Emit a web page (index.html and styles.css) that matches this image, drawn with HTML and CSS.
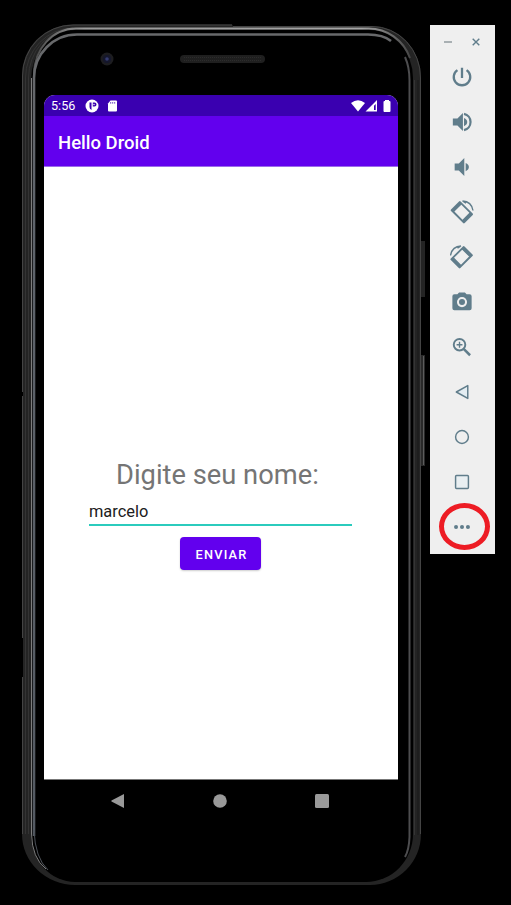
FILE: index.html
```html
<!DOCTYPE html>
<html lang="pt">
<head>
<meta charset="utf-8">
<title>Hello Droid</title>
<link rel="stylesheet" href="styles.css">
</head>
<body>
<main class="desktop">
  <section class="phone">
    <svg class="frame" viewBox="0 0 430 905" fill="none" aria-hidden="true">
      <defs>
        <linearGradient id="topEdge" gradientUnits="userSpaceOnUse" x1="30" y1="0" x2="420" y2="0">
          <stop offset="0" stop-color="#444"/><stop offset=".14" stop-color="#999"/><stop offset=".85" stop-color="#a5a5a5"/><stop offset="1" stop-color="#333"/>
        </linearGradient>
        <linearGradient id="slate" gradientUnits="userSpaceOnUse" x1="0" y1="34" x2="0" y2="870">
          <stop offset="0" stop-color="#68696b"/><stop offset=".2" stop-color="#60656c"/><stop offset=".96" stop-color="#555b63"/><stop offset="1" stop-color="#17191b"/>
        </linearGradient>
      </defs>
      <path d="M421 241h4v56h-4z" fill="#242424"/>
      <path d="M421 355h4v111h-4z" fill="#292929"/>
      <path d="M423.500 356v109" stroke="#5c5c5c"/>
      <path d="M22 76A51 51 0 0 1 73 24.500H232L233 26H372A49 52 0 0 1 421 78V834A51 51 0 0 1 370 885H75A53 51 0 0 1 22 834Z" fill="#242424"/>
      <path d="M22.500 834V76A50.500 51 0 0 1 73 25H232M233 26.500H372A48.500 51 0 0 1 420.500 78V834" stroke="#444"/>
      <path d="M25.500 834V78A48 50 0 0 1 73 28M28.500 834V78A45 49 0 0 1 73 29" stroke="#343434"/>
      <path d="M31 834V80A44 50 0 0 1 75 30H370A43 48 0 0 1 413 78V834A47 48 0 0 1 366 882H75A44 48 0 0 1 31 834Z" fill="#000"/>
      <path d="M34 74A42 45.500 0 0 1 76 28.500H368A44 45 0 0 1 410 58" stroke="url(#topEdge)" stroke-width="2"/>
      <path d="M31.500 78V834Q32 858 46 869" stroke="#7d7d7d"/>
      <path d="M34 836V78A43 43.500 0 0 1 77 34.500H368Q383 34.500 391 41" stroke="url(#slate)" stroke-width="2.600"/>
      <path d="M34 830Q35 858 48 870" stroke="#4d5259"/>
      <path d="M405 57Q409.500 67 409.500 80V837Q409 850 405 857" stroke="#4d4d4f" stroke-width="2"/>
      <path d="M414.500 80V835" stroke="#353535"/>
      <path d="M418 80V835" stroke="#181818"/>
      <path d="M22.500 392v4M22.500 638v39" stroke="#000"/>
      <circle cx="107" cy="59" r="6.500" fill="#1d1d20"/>
      <circle cx="107" cy="59" r="4" fill="#15172c"/>
      <circle cx="107" cy="59" r="1.800" fill="#353b70"/>
      <rect x="180" y="55" width="85" height="8" rx="4" fill="#1f1f1f"/>
      <path d="M184 57.500H262M184 60.500H262" stroke="#2c2c2c" stroke-dasharray="1 1"/>
    </svg>
    <div class="screen">
      <div class="statusbar">
        <span class="time">5:56</span>
        <svg class="notices" viewBox="0 0 34 14" fill="#fff">
          <circle cx="7" cy="7" r="6.500"/>
          <path d="M4.500 3.500h2v7.500q-2-1-2-3zM7.800 3.500h1.700a2 2 0 0 1 0 4H7.800z" fill="#3a00b0"/>
          <circle cx="9" cy="5.500" r=".7" fill="#fff"/>
          <path d="M25.500 1.500H31a1 1 0 0 1 1 1v9a1 1 0 0 1-1 1h-7a1 1 0 0 1-1-1V4.500z"/>
          <path d="M25.700 3v1.700M27.700 3v1.700M29.700 3v1.700" stroke="#3a00b0" stroke-width=".7"/>
        </svg>
        <svg class="signals" viewBox="0 0 42 14" fill="#fff">
          <path d="M0 4Q7-1.500 14 4L7 12.500z"/>
          <path fill-rule="evenodd" d="M26 1v11.500H14.500zM24.700 5v6h-1.700V6.700z"/>
          <path d="M32.500 3q0-1 1-1H34V1h4v1h.5q1 0 1 1v9q0 1-1 1h-5q-1 0-1-1z"/>
        </svg>
      </div>
      <header class="appbar">Hello Droid</header>
      <div class="content">
        <div class="prompt">Digite seu nome:</div>
        <div class="field">marcelo</div>
        <div class="button">ENVIAR</div>
      </div>
    </div>
    <nav class="navbar">
      <svg viewBox="0 0 16 16"><path d="M14 1v14L1.500 8.600Q1 8 1.500 7.400z"/></svg>
      <svg viewBox="0 0 16 16"><circle cx="8" cy="8" r="6.800"/></svg>
      <svg viewBox="0 0 16 16"><rect x="1" y="1" width="14" height="14" rx="1.500"/></svg>
    </nav>
  </section>
  <aside class="toolbar">
    <div class="window-controls">
      <svg viewBox="0 0 10 10"><path d="M1 5h8" stroke="#929b9f" stroke-width="1.500"/></svg>
      <svg viewBox="0 0 10 10"><path d="M1.700 1.700l6.600 6.600M8.300 1.700L1.700 8.300" stroke="#607d8b" stroke-width="1.400"/></svg>
    </div>
    <div class="tool"><svg viewBox="0 0 24 24"><path d="M12 2v11M7 4.500a9 9 0 1 0 10 0" fill="none" stroke="#607d8b" stroke-width="2.500"/></svg></div>
    <div class="tool"><svg viewBox="0 0 24 24"><path d="M2 8.300H7l6-6v19.400l-6-6H2zM14.200 7.500q3.500 1.500 3.500 4.500t-3.500 4.500z"/><path d="M14.200 3.200a9 9 0 0 1 0 17.600" fill="none" stroke="#607d8b" stroke-width="2.400"/></svg></div>
    <div class="tool"><svg viewBox="0 0 24 24"><path d="M4 8.300H8.500l6-6v19.400l-6-6H4zM16 7.500q3.500 1.500 3.500 4.500T16 16.500z"/></svg></div>
    <div class="tool"><svg class="large" viewBox="0 0 24 24"><g id="rotate"><path fill-rule="evenodd" d="M1 11q-.8-.8 0-1.600L9 1.400q.8-.8 1.600 0L22.700 13.500q.8.800 0 1.600L14.700 23.100q-.8.800-1.600 0zM3.900 11.100L13 20.200 19.900 13.300 10.800 4.200z"/><path d="M2 10.200L9.800 2.400 11.800 4.200 3.900 12.100zM12 20.200L19.900 12.300 21.800 14.200 13.900 22.100z"/><path d="M12.500 1Q21.500 1.500 23 10.500M12.500 1l3.500 2.200" fill="none" stroke="#607d8b" stroke-width="1.400"/></g></svg></div>
    <div class="tool"><svg class="large" viewBox="0 0 24 24"><use href="#rotate" transform="matrix(-1 0 0 1 23.500 0)"/></svg></div>
    <div class="tool"><svg viewBox="0 0 24 24"><path fill-rule="evenodd" d="M7 3.500L8.800 1.500h6.400L17 3.500h3.300Q22.500 3.500 22.500 5.700v13.100q0 2.200-2.200 2.200H3.700q-2.200 0-2.200-2.200V5.700Q1.500 3.500 3.700 3.500zM12 6.600a5.500 5.500 0 1 0 0 11 5.500 5.500 0 0 0 0-11"/><circle cx="12" cy="12.100" r="3.300"/></svg></div>
    <div class="tool"><svg viewBox="0 0 24 24" fill="none" stroke="#607d8b"><circle cx="9.300" cy="9.500" r="6.300" stroke-width="2.100"/><path d="M13.800 14l7 7" stroke-width="2.700"/><path d="M6.100 9.500h6.400M9.300 6.300v6.400" stroke-width="1.500"/></svg></div>
    <div class="tool"><svg viewBox="0 0 24 24" fill="none" stroke="#607d8b"><path d="M18.300 5v14L5.800 12z" fill="#e4edf2" stroke-width="1.600" stroke-linejoin="round"/></svg></div>
    <div class="tool"><svg viewBox="0 0 24 24" fill="none" stroke="#607d8b"><circle cx="12" cy="12" r="7" stroke-width="1.600"/></svg></div>
    <div class="tool"><svg viewBox="0 0 24 24" fill="none" stroke="#607d8b"><rect x="5" y="5" width="14" height="14" rx="1" fill="#e9eff2" stroke-width="1.600"/></svg></div>
    <div class="tool more"><svg viewBox="0 0 24 24"><circle cx="5.500" cy="12" r="2.200"/><circle cx="12" cy="12" r="2.200"/><circle cx="18.500" cy="12" r="2.200"/></svg><span class="highlight"></span></div>
  </aside>
</main>
</body>
</html>
```
FILE: styles.css
```css
* { box-sizing: border-box; }
body { margin: 0; background: #000; font-family: Roboto, sans-serif; }
svg { display: block; flex: none; }
.desktop { display: flex; align-items: flex-start; width: 511px; height: 905px; background: #000; overflow: hidden; }
.phone { position: relative; width: 430px; height: 905px; padding: 95px 32px 0 44px; }
.frame { position: absolute; inset: 0; width: 430px; height: 905px; }
.screen { position: relative; width: 354px; height: 685px; background: #fff; border-radius: 11px 11px 0 0; overflow: hidden; border-bottom: 1px solid #777; }
.statusbar { display: flex; align-items: center; height: 21px; padding: 0 5px 0 7px; background: #3a00b0; color: #fff; }
.time { width: 34px; font-size: 12.6px; line-height: 21px; }
.notices { width: 34px; height: 14px; }
.signals { width: 42px; height: 14px; margin-left: auto; }
.appbar { height: 51px; padding-left: 14px; background: #6200ee; border-bottom: 1px solid #9c6bea; color: #fff; font-size: 18.5px; font-weight: 500; line-height: 54px; }
.content { display: flex; flex-direction: column; padding: 290px 46px 0 45px; }
.prompt { align-self: flex-start; margin-left: 27px; font-size: 27.3px; line-height: 36px; color: #757575; white-space: nowrap; }
.field { height: 33px; border-bottom: 2px solid #2bcbbd; color: #202020; font-size: 16.4px; line-height: 38px; }
.button { width: 81px; height: 33px; margin: 11px 0 0 91px; border-radius: 4px; background: #6200ee; box-shadow: 0 1px 2px #0003; color: #fff; font-size: 12.8px; font-weight: 500; letter-spacing: 1.2px; line-height: 35px; text-align: center; padding-left: 2px; }
.navbar { position: relative; display: flex; justify-content: space-between; width: 220px; margin: 13px 0 0 66px; }
.navbar svg { width: 16px; height: 16px; fill: #999; }
.toolbar { width: 65px; height: 529px; margin-top: 25px; background: #efefef; }
.window-controls { display: flex; align-items: center; justify-content: center; gap: 18px; height: 29px; padding: 5px 1px 0 0; }
.window-controls svg { width: 10px; height: 10px; }
.tool { position: relative; display: flex; align-items: center; justify-content: center; height: 45px; padding-right: 1px; }
.tool svg { width: 22px; height: 22px; fill: #607d8b; }
.tool svg[fill="none"] { fill: none; }
.tool svg.large { width: 24px; height: 24px; }
.highlight { position: absolute; left: 9px; top: -1px; width: 51px; height: 47px; border: 5px solid #ed1c24; border-radius: 50%; }
```
